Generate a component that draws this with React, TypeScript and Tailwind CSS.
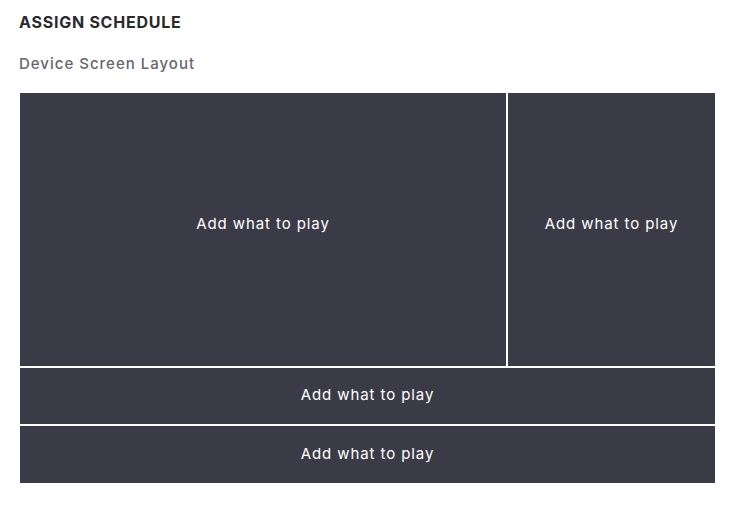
export default function App() {
  const cell = 'flex items-center justify-center border border-white bg-[#3b3b47] text-[15px] text-white tracking-[0.9px]'
  return (
    <div className="min-h-screen bg-white px-[19px] pt-[12px] font-['Inter',sans-serif]">
      <h1 className="text-[16px] font-bold leading-[20px] tracking-[0.75px] text-[#2a2a2e]">ASSIGN SCHEDULE</h1>
      <h2 className="mt-[22px] text-[15px] font-medium leading-[20px] tracking-[1px] text-[#66666c]">Device Screen Layout</h2>
      <div className="mt-[18px] flex w-[697px] flex-col">
        <div className="flex h-[275px]">
          <div className={`${cell} w-[488px] pb-[10px]`}>Add what to play</div>
          <div className={`${cell} flex-1 pb-[10px]`}>Add what to play</div>
        </div>
        <div className={`${cell} h-[58px] pb-[2px]`}>Add what to play</div>
        <div className={`${cell} h-[59px]`}>Add what to play</div>
      </div>
    </div>
  )
}
